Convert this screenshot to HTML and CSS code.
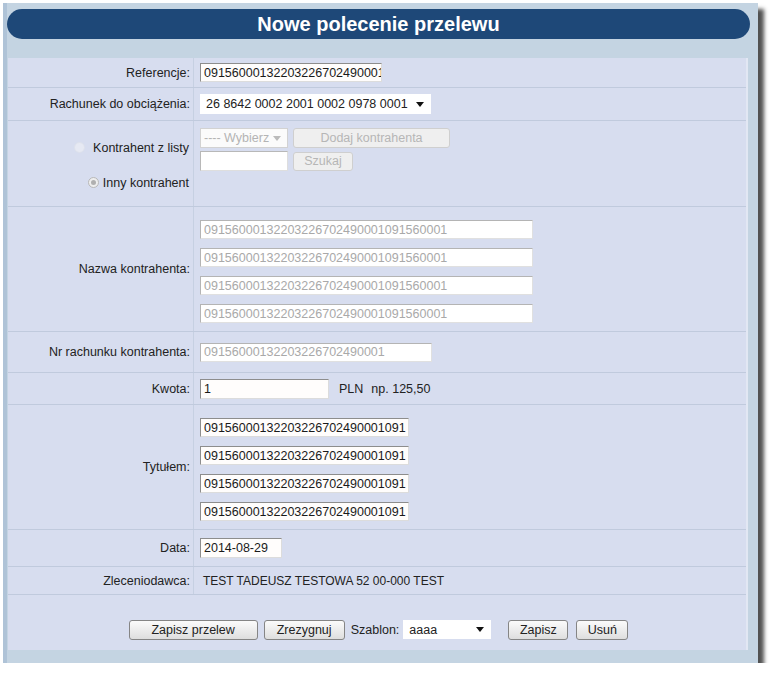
FILE: index.html
```html
<!DOCTYPE html>
<html lang="pl">
<head>
<meta charset="utf-8">
<title>Nowe polecenie przelewu</title>
<link rel="stylesheet" href="styles.css">
</head>
<body>
<div class="window">
  <div class="titlebar">Nowe polecenie przelewu</div>
  <div class="form">
    <div class="row h30">
      <div class="lbl">Referencje:</div>
      <div class="val"><input class="inp w-ref" type="text" value="09156000132203226702490001091560001"></div>
    </div>
    <div class="row h33">
      <div class="lbl">Rachunek do obciążenia:</div>
      <div class="val">
        <div class="sel w-acc"><span>26 8642 0002 2001 0002 0978 0001</span><svg class="arr" width="8" height="5" viewBox="0 0 8 5"><path d="M0 0h8L4 5z" fill="#111"/></svg></div>
      </div>
    </div>
    <div class="row h86">
      <div class="lbl lbl-radio">
        <div class="ropt"><span class="radio faint"></span>Kontrahent z listy</div>
        <div class="ropt"><span class="radio checked"></span>Inny kontrahent</div>
      </div>
      <div class="val val-top">
        <div class="subrow">
          <div class="sel sel-dis w-small"><span>---- Wybierz</span><svg class="arr" width="8" height="5" viewBox="0 0 8 5"><path d="M0 0h8L4 5z" fill="#bbb"/></svg></div>
          <div class="btn btn-dis w-dodaj">Dodaj kontrahenta</div>
        </div>
        <div class="subrow">
          <input class="inp inp-plain w-small" type="text" value="">
          <div class="btn btn-dis w-szukaj">Szukaj</div>
        </div>
      </div>
    </div>
    <div class="row h125">
      <div class="lbl">Nazwa kontrahenta:</div>
      <div class="val val-stack">
        <input class="inp inp-dis w-name" type="text" value="09156000132203226702490001091560001" disabled>
        <input class="inp inp-dis w-name" type="text" value="09156000132203226702490001091560001" disabled>
        <input class="inp inp-dis w-name" type="text" value="09156000132203226702490001091560001" disabled>
        <input class="inp inp-dis w-name" type="text" value="09156000132203226702490001091560001" disabled>
      </div>
    </div>
    <div class="row h41">
      <div class="lbl">Nr rachunku kontrahenta:</div>
      <div class="val"><input class="inp inp-dis w-nr" type="text" value="09156000132203226702490001" disabled></div>
    </div>
    <div class="row h32">
      <div class="lbl">Kwota:</div>
      <div class="val"><input class="inp w-kwota" type="text" value="1"><span class="cur">PLN</span><span class="hint">np. 125,50</span></div>
    </div>
    <div class="row h125">
      <div class="lbl">Tytułem:</div>
      <div class="val val-stack">
        <input class="inp w-tyt" type="text" value="09156000132203226702490001091">
        <input class="inp w-tyt" type="text" value="09156000132203226702490001091">
        <input class="inp w-tyt" type="text" value="09156000132203226702490001091">
        <input class="inp w-tyt" type="text" value="09156000132203226702490001091">
      </div>
    </div>
    <div class="row h37">
      <div class="lbl">Data:</div>
      <div class="val"><input class="inp w-data" type="text" value="2014-08-29"></div>
    </div>
    <div class="row h28">
      <div class="lbl">Zleceniodawca:</div>
      <div class="val"><span class="plain">TEST TADEUSZ TESTOWA 52 00-000 TEST</span></div>
    </div>
    <div class="row actions">
      <div class="btn w-zp">Zapisz przelew</div>
      <div class="btn w-zr">Zrezygnuj</div>
      <span class="szablon">Szablon:</span>
      <div class="sel w-szab"><span>aaaa</span><svg class="arr" width="8" height="5" viewBox="0 0 8 5"><path d="M0 0h8L4 5z" fill="#111"/></svg></div>
      <div class="btn w-zap">Zapisz</div>
      <div class="btn w-us">Usuń</div>
    </div>
  </div>
</div>
</body>
</html>
```

FILE: styles.css
```css
* { box-sizing: border-box; }

html, body {
  margin: 0;
  padding: 0;
  background: #ffffff;
}

body {
  font-family: "Liberation Sans", Arial, sans-serif;
  font-size: 12.5px;
  color: #222;
}

.window {
  margin: 3px 0 0 3px;
  width: 755px;
  height: 660px;
  background: #c4d4e2;
  border-left: 4px solid #afc3d7;
  padding: 6px 8px 13px 0;
  box-shadow: 6px 6px 4px rgba(50, 50, 50, 0.85);
}

.titlebar {
  height: 30px;
  border-radius: 15px;
  background: #1e4878;
  color: #fff;
  font-weight: bold;
  font-size: 20px;
  line-height: 30px;
  text-align: center;
}

.form {
  margin: 19px 2px 0 1px;
  height: 592px;
  background: #d7ddef;
  border-right: 2px solid #e2e7f3;
}

.row {
  display: grid;
  grid-template-columns: 186px 1fr;
  border-bottom: 1px solid #c0cadd;
}

.h30 { height: 30px; }
.h33 { height: 33px; }
.h86 { height: 86px; }
.h125 { height: 125px; }
.h41 { height: 41px; }
.h32 { height: 32px; }
.h37 { height: 37px; }
.h28 { height: 28px; }

.lbl {
  display: flex;
  align-items: center;
  justify-content: flex-end;
  padding-right: 3px;
  border-right: 1px solid #c6d0e2;
  white-space: nowrap;
}

.val {
  display: flex;
  align-items: center;
  padding-left: 6px;
}

.val-top {
  flex-direction: column;
  align-items: flex-start;
  justify-content: flex-start;
  padding-top: 7px;
  gap: 3px;
}

.subrow {
  display: flex;
  gap: 5px;
  align-items: center;
}

.val-stack {
  flex-direction: column;
  align-items: flex-start;
  justify-content: flex-start;
  padding-top: 13px;
  gap: 9px;
}

.lbl-radio {
  flex-direction: column;
  align-items: flex-end;
  justify-content: center;
  gap: 21px;
  padding-top: 3px;
  padding-right: 4px;
}

.ropt {
  display: flex;
  align-items: center;
  height: 14px;
  line-height: 14px;
}

.radio {
  display: inline-block;
  width: 11px;
  height: 11px;
  border-radius: 50%;
  margin-right: 8px;
  position: relative;
}

.radio.faint {
  background: #e6e9f3;
  border: 1px solid #dde1ec;
}

.radio.checked {
  background: #eeeeee;
  border: 1px solid #b8b8b8;
  margin-right: 4px;
}

.radio.checked::after {
  content: "";
  position: absolute;
  left: 2px;
  top: 2px;
  width: 5px;
  height: 5px;
  border-radius: 50%;
  background: #b0b0b0;
}

.inp {
  height: 19px;
  padding: 0 0 0 3px;
  margin: 0;
  font-family: "Liberation Sans", Arial, sans-serif;
  font-size: 12.5px;
  color: #1a1a1a;
  background: #fffdfc;
  border: 1px solid;
  border-color: #8d8d8d #dcdcdc #dcdcdc #8d8d8d;
  border-radius: 0;
  outline: none;
}

.inp-dis {
  color: #a9a9a9;
  background: #ffffff;
  border-color: #b4b4b4 #e0e0e0 #e0e0e0 #b4b4b4;
  -webkit-text-fill-color: #a9a9a9;
  opacity: 1;
}

.inp-plain {
  height: 20px;
  background: #fff;
  border-color: #b8b8b8 #dedede #dedede #b8b8b8;
}

.w-ref { width: 182px; }
.w-small { width: 88px; }
.w-name { width: 333px; }
.w-nr { width: 232px; }
.w-kwota { width: 129px; height: 20px; }
.w-tyt { width: 209px; }
.w-data { width: 82px; height: 20px; }

.sel {
  display: flex;
  align-items: center;
  justify-content: space-between;
  height: 20px;
  background: #fff;
  padding: 0 7px 0 6px;
  white-space: nowrap;
}

.sel .arr { flex: none; }

.w-acc { width: 231px; }
.w-szab { width: 88px; height: 19px; margin-left: -2px; margin-right: 11px; }

.sel-dis {
  border: 1px solid #d2d2d2;
  color: #b4b4b4;
  padding: 0 6px 0 3px;
  background: #fbfbfb;
}

.btn {
  display: flex;
  align-items: center;
  justify-content: center;
  height: 20px;
  border: 1px solid #858585;
  border-radius: 3px;
  background: linear-gradient(#fbfbfb, #dedede);
  color: #222;
  white-space: nowrap;
}

.btn-dis {
  border-color: #cfcfcf;
  background: #efefef;
  color: #b6b6b6;
}

.w-dodaj { width: 157px; }
.w-szukaj { width: 60px; height: 19px; }

.cur { margin-left: 10px; }
.hint { margin-left: 8px; }

.plain { margin-left: 3px; font-size: 12px; }

.actions {
  display: flex;
  justify-content: center;
  align-items: flex-start;
  gap: 6px;
  height: 55px;
  padding-top: 25px;
  padding-left: 3px;
  border-bottom: none;
}

.szablon { line-height: 20px; }

.w-zp { width: 129px; }
.w-zr { width: 81px; }
.w-zap { width: 60px; }
.w-us { width: 52px; margin-left: 2px; }
```
